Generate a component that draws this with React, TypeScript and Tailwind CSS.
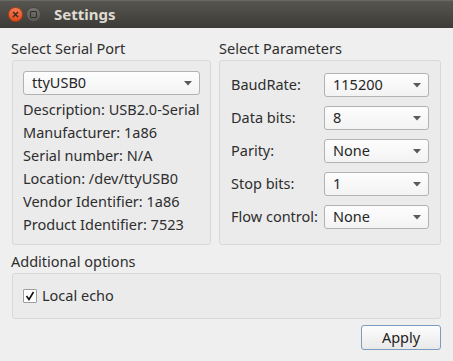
import React from "react";

const font = { fontFamily: '"Noto Sans", "DejaVu Sans", sans-serif' };

function Arrow() {
  return (
    <svg width="8" height="5" viewBox="0 0 8 5" className="shrink-0">
      <path d="M0 0 L8 0 L4 4.5 Z" fill="#5a5a5a" />
    </svg>
  );
}

function Combo({ value, className }: { value: string; className: string }) {
  return (
    <div
      className={`flex items-center justify-between h-[24px] rounded-[3px] border border-[#b2b2b2] bg-gradient-to-b from-[#fdfdfd] to-[#f3f3f3] pl-[8px] pr-[7px] text-[#262626] ${className}`}
    >
      <span>{value}</span>
      <Arrow />
    </div>
  );
}

export default function App() {
  const info = [
    "Description: USB2.0-Serial",
    "Manufacturer: 1a86",
    "Serial number: N/A",
    "Location: /dev/ttyUSB0",
    "Vendor Identifier: 1a86",
    "Product Identifier: 7523",
  ];
  const params: [string, string][] = [
    ["BaudRate:", "115200"],
    ["Data bits:", "8"],
    ["Parity:", "None"],
    ["Stop bits:", "1"],
    ["Flow control:", "None"],
  ];
  return (
    <div
      style={font}
      className="w-[453px] h-[361px] bg-[#efefef] text-[14.5px] text-[#2e2e2e] flex flex-col overflow-hidden"
    >
      {/* Title bar */}
      <div className="h-[28px] shrink-0 flex items-center bg-gradient-to-b from-[#57554f] to-[#3c3b37] border-t border-[#6a6862]">
        <div className="ml-[8px] w-[15px] h-[15px] rounded-full bg-gradient-to-b from-[#f37b52] to-[#df4a16] border border-[#b53c14] flex items-center justify-center">
          <svg width="7" height="7" viewBox="0 0 7 7">
            <path d="M1 1 L6 6 M6 1 L1 6" stroke="#3a2a22" strokeWidth="1.4" />
          </svg>
        </div>
        <div className="ml-[3px] w-[15px] h-[15px] rounded-full bg-gradient-to-b from-[#77756f] to-[#5a5853] border border-[#4a4844] flex items-center justify-center">
          <div className="w-[7px] h-[7px] border border-[#2e2d2a] rounded-[1px]" />
        </div>
        <span className="ml-[13px] text-[15px] font-bold text-[#dfdbd2]">Settings</span>
      </div>

      {/* Body */}
      <div className="flex flex-col px-[12px] pt-[10px]">
        <div className="grid grid-cols-[199px_222px] gap-x-[8px]">
          <div className="flex flex-col">
            <div className="h-[20px] leading-[20px] -ml-[1px] whitespace-nowrap">Select Serial Port</div>
            <div className="mt-[2px] h-[185px] rounded-[3px] border border-[#d8d8d8] bg-[#ebebeb] pt-[10px] pl-[10px] pr-[11px]">
              <Combo value="ttyUSB0" className="w-[177px]" />
              <div className="mt-[3px] flex flex-col">
                {info.map((t) => (
                  <div key={t} className="h-[23px] leading-[23px] whitespace-nowrap">
                    {t}
                  </div>
                ))}
              </div>
            </div>
          </div>
          <div className="flex flex-col">
            <div className="h-[20px] leading-[20px] whitespace-nowrap">Select Parameters</div>
            <div className="mt-[2px] h-[185px] rounded-[3px] border border-[#d8d8d8] bg-[#ebebeb] pt-[12px] pl-[11px] pr-[11px] flex flex-col gap-[9px]">
              {params.map(([l, v]) => (
                <div key={l} className="flex items-center justify-between">
                  <span className="whitespace-nowrap">{l}</span>
                  <Combo value={v} className="w-[105px]" />
                </div>
              ))}
            </div>
          </div>
        </div>

        <div className="mt-[6px] h-[20px] leading-[20px] -ml-[1px]">Additional options</div>
        <div className="mt-[2px] h-[46px] rounded-[3px] border border-[#d8d8d8] bg-[#ebebeb] flex items-center pl-[10px]">
          <div className="w-[14px] h-[14px] border border-[#9e9e9e] bg-white rounded-[1px] flex items-center justify-center">
            <svg width="10" height="10" viewBox="0 0 10 10">
              <path d="M1.5 5 L4 8.5 L8.5 1" stroke="#111" strokeWidth="1.6" fill="none" />
            </svg>
          </div>
          <span className="ml-[5px]">Local echo</span>
        </div>

        <div className="mt-[6px] flex justify-end">
          <div className="w-[80px] h-[25px] rounded-[3px] border border-[#7a9cbf] bg-gradient-to-b from-[#fdfdfd] to-[#e9e9e9] flex items-center justify-center text-[#222]">
            Apply
          </div>
        </div>
      </div>
    </div>
  );
}
